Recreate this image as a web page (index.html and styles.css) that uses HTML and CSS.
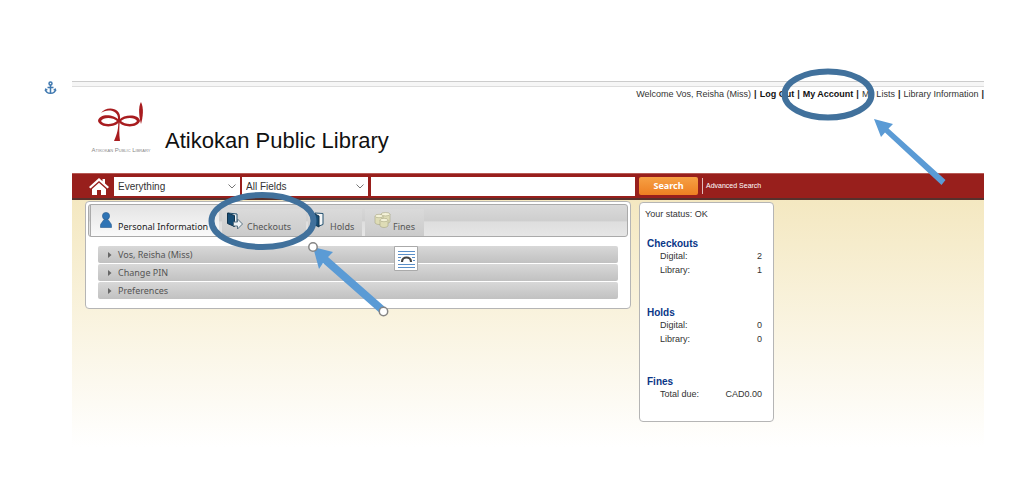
FILE: index.html
```html
<!DOCTYPE html>
<html lang="en">
<head>
<meta charset="utf-8">
<title>Atikokan Public Library</title>
<link rel="stylesheet" href="styles.css">
</head>
<body>
<div class="page">
  <header class="header">
    <nav class="user-nav">
      <span>Welcome Vos, Reisha (Miss)</span><b>|</b>
      <a class="strong" href="#">Log Out</a><b>|</b>
      <a class="strong" href="#">My Account</a><b>|</b>
      <a href="#">My Lists</a><b>|</b>
      <a href="#">Library Information</a><b>|</b>
    </nav>
    <div class="brand">
      <div class="logo">
        <svg width="46" height="42" viewBox="0 0 46 42" fill="#a81c1f">
          <path d="M3 11C8 7 21 7 20 18h2C24 4 7 4 3 11Z"/>
          <path fill-rule="evenodd" d="M0 19c1-8 16-7 21-1c5-6 20-6 21 1c-2 7-17 7-21 1c-4 6-19 6-21-1Zm3 0c2 4 12 4 16 0c-4-4-14-4-16 0Zm20 0c4 4 14 4 16 0c-2-4-12-4-16 0Z"/>
          <path d="M20 18c1 8-1 14-4 21h6c-1-7-1-14 0-21Z"/>
          <path d="M43 0c3 6 2 15 0 22c-2-7-3-17 0-22Z"/>
        </svg>
        <span class="logo-text">Atikokan Public Library</span>
      </div>
      <h1 class="title">Atikokan Public Library</h1>
    </div>
  </header>

  <form class="search-bar">
    <a class="home" href="#" aria-label="Home">
      <svg width="20" height="17" viewBox="0 0 20 17" fill="#fff"><path d="M10 0L0 9l1.500 1.500L10 3l8.500 7.500L20 9l-4-3.600V1h-2.500v2.200Z"/><path d="M3 11l7-6.300L17 11v6h-5v-5H8v5H3Z"/></svg>
    </a>
    <div class="select-wrap">
      <select class="field" aria-label="Search in"><option>Everything</option></select>
      <svg class="chevron" width="8" height="5" viewBox="0 0 8 5" fill="none" stroke="#777"><path d="M.5.5L4 4L7.500.5"/></svg>
    </div>
    <div class="select-wrap">
      <select class="field" aria-label="Search field"><option>All Fields</option></select>
      <svg class="chevron" width="8" height="5" viewBox="0 0 8 5" fill="none" stroke="#777"><path d="M.5.5L4 4L7.500.5"/></svg>
    </div>
    <input class="field query" type="text" aria-label="Search terms">
    <button class="search-button" type="button">Search</button>
    <a class="advanced" href="#">Advanced Search</a>
  </form>

  <main class="content">
    <section class="panel account">
      <div class="tabs" role="tablist">
        <button class="tab active" type="button" role="tab" aria-selected="true">
          <svg width="12" height="16" viewBox="0 0 12 16" fill="#2f74b5" stroke="#285b8d" stroke-width=".6"><path d="M4 7.500C1 12 0 12 .5 15.500h11C12 12 11 12 8 7.500Z"/><circle cx="6" cy="4" r="3.600"/></svg>
          <span>Personal Information</span>
        </button>
        <button class="tab checkouts" type="button" role="tab">
          <svg width="18" height="18" viewBox="0 0 18 18"><path d="M2 1l9 1v10l-3 3Z" fill="#f4f6f7" stroke="#23506f"/><path d="M1.500 1l7 2.500v11l-7-3Z" fill="#174d75" stroke="#12344d"/><path d="M7.500 10h4V7l5 5-5 5v-3h-4Z" fill="#eef3f5" stroke="#5b7383"/></svg>
          <span>Checkouts</span>
        </button>
        <button class="tab holds" type="button" role="tab">
          <svg width="12" height="16" viewBox="0 0 12 16"><path d="M3 1l8 .5v11L7 14Z" fill="#f4f6f7" stroke="#23506f"/><path d="M1 1l6 3v11l-6-3Z" fill="#174d75" stroke="#12344d"/></svg>
          <span>Holds</span>
        </button>
        <button class="tab fines" type="button" role="tab">
          <svg width="17" height="16" viewBox="0 0 17 16" fill="#dedcb6" stroke="#9e9c78" stroke-width=".5"><path d="M7 2v8c2 2 7 2 9 0V2Z"/><ellipse cx="11.500" cy="2.200" rx="4.500" ry="1.700" fill="#f4f2d8"/><path d="M1 4v7c2 2 6 2 8 0V4Z"/><ellipse cx="5" cy="4" rx="4" ry="1.700" fill="#f4f2d8"/><path d="M6 8v6c2 2 6 2 8 0V8Z"/><ellipse cx="10" cy="8" rx="4" ry="1.700" fill="#f4f2d8"/></svg>
          <span>Fines</span>
        </button>
      </div>
      <div class="accordion">
        <button class="row" type="button"><svg width="4" height="6" viewBox="0 0 4 6"><path d="M0 0l3.500 3L0 6Z" fill="#666"/></svg>Vos, Reisha (Miss)</button>
        <button class="row" type="button"><svg width="4" height="6" viewBox="0 0 4 6"><path d="M0 0l3.500 3L0 6Z" fill="#666"/></svg>Change PIN</button>
        <button class="row" type="button"><svg width="4" height="6" viewBox="0 0 4 6"><path d="M0 0l3.500 3L0 6Z" fill="#666"/></svg>Preferences</button>
      </div>
    </section>

    <aside class="panel summary">
      <p class="status">Your status: OK</p>
      <section class="group">
        <h2>Checkouts</h2>
        <dl><dt>Digital:</dt><dd>2</dd><dt>Library:</dt><dd>1</dd></dl>
      </section>
      <section class="group">
        <h2>Holds</h2>
        <dl><dt>Digital:</dt><dd>0</dd><dt>Library:</dt><dd>0</dd></dl>
      </section>
      <section class="group">
        <h2>Fines</h2>
        <dl><dt>Total due:</dt><dd>CAD0.00</dd></dl>
      </section>
    </aside>
  </main>

  <svg class="annotations" width="1024" height="481" viewBox="0 0 1024 481" fill="none" aria-hidden="true">
    <g stroke="#4079b0" stroke-width="1.500"><circle cx="50.500" cy="83.500" r="1.500"/><path d="M50.500 85v9M47.500 87.500h6M45.500 89.500c.5 5 9.500 5 10 0"/><path d="M44.500 91l1-3 2.500 2ZM56.500 91l-1-3-2.500 2Z" fill="#4079b0" stroke="none"/></g>
    <g stroke="#41719c" stroke-width="6"><ellipse cx="828" cy="94.500" rx="43.500" ry="23"/><ellipse cx="262.500" cy="221" rx="51" ry="26"/></g>
    <g fill="#5b9bd5">
      <path d="M874 119l19 5-4.500 4.500L945.500 180l-4 5L885 132.500l-4 4.500Z"/>
      <path d="M313 247l20 5-5 5L386 308l-5 6-58-51-4 6Z"/>
    </g>
    <g fill="#fff" stroke="#858585" stroke-width="1.500"><circle cx="313" cy="247" r="4.200"/><circle cx="383.500" cy="311.500" r="4.200"/></g>
    <path d="M394.500 246.500h23v24h-23Z" fill="#fff" stroke="#aaa"/>
    <path d="M398 251.500h17M398 254.500h17M398 257.500h3M412 257.500h3M398 260.500h2M413 260.500h2M398 264.500h17M398 267.500h17" stroke="#5b8fc8"/>
    <path d="M402 262c0-6 9-6 9 0" stroke="#444" stroke-width="2.200"/>
  </svg>
</div>
</body>
</html>
```
FILE: styles.css
```css
* { box-sizing: border-box; }

body {
  margin: 0;
  background: #fff;
  color: #333;
  font: 9px/12px "Liberation Sans", Arial, sans-serif;
}

a { color: inherit; text-decoration: none; }
h1, h2, p, dl, dd { margin: 0; }
button, select, input { font: inherit; color: inherit; border: 0; padding: 0; border-radius: 0; }
svg { flex: none; }

.page { position: relative; padding: 81px 40px 32px 72px; }

.header {
  border-top: 1px solid #ccc;
  padding-bottom: 19px;
}
.header::before {
  content: "";
  display: block;
  height: 4px;
  background: #f6f6f6;
  border-bottom: 1px solid #ddd;
}

.user-nav { display: flex; justify-content: flex-end; gap: 3px; padding: 1px 0 2px; white-space: nowrap; }
.user-nav .strong { font-weight: bold; color: #111; }
.user-nav b { color: #222; }

.brand { display: flex; align-items: flex-end; gap: 12px; padding-left: 17px; }
.logo { display: flex; flex-direction: column; align-items: center; gap: 2px; width: 64px; }
.logo-text { font: 6px/8px "Liberation Sans", Arial, sans-serif; font-variant: small-caps; color: #888; white-space: nowrap; }
.title { font-size: 22px; line-height: 26px; font-weight: normal; color: #111; }

.search-bar {
  display: flex;
  align-items: center;
  height: 27px;
  padding-left: 17px;
  background: #981f1c;
  border-top: 1px solid #b75a55;
  border-bottom: 2px solid #57302c;
}
.home { display: flex; margin-right: 5px; }
.select-wrap { position: relative; display: flex; width: 126px; margin-right: 2px; }
.field { height: 19px; background: #fff; outline: 0; }
.select-wrap .field { width: 100%; padding: 1px 0 0 4px; appearance: none; font-size: 10px; }
.chevron { position: absolute; right: 4px; top: 7px; pointer-events: none; }
.query { flex: 0 1 264px; min-width: 0; margin-left: 1px; padding: 0 4px; }
.search-button {
  width: 59px;
  height: 18px;
  margin: 0 4px;
  border-radius: 2px;
  background: linear-gradient(#f6a044, #ee7f22);
  color: #fff;
  font: bold 9px/18px "Noto Sans", sans-serif;
}
.advanced { border-left: 1px solid #e2bdbb; padding-left: 3px; color: #fff; font-size: 7px; line-height: 16px; white-space: nowrap; }

.content {
  display: flex;
  align-items: flex-start;
  gap: 8px;
  min-height: 247px;
  padding: 1px 13px 0;
  background: linear-gradient(#f4e8c1, #fff);
}
.panel { background: #fff; border: 1px solid #b5b5b5; border-radius: 4px; }

.account { flex: 0 1 546px; min-width: 0; padding: 2px 2px 9px; }
.tabs {
  display: flex;
  align-items: flex-end;
  height: 33px;
  border: 1px solid #aaa;
  border-radius: 3px;
  background: linear-gradient(#dadada, #cecece 52%, #dedede 54%, #e6e6e6);
  color: #555;
  font: 9px/12px "Noto Sans", Verdana, sans-serif;
}
.tab { display: flex; align-items: flex-start; height: 27px; padding-top: 3px; background: linear-gradient(#dadada, #cbcbcb); white-space: nowrap; }
.tab span { padding-top: 9px; }
.tab.active { width: 129px; height: 31px; margin-left: 1px; padding: 7px 0 0 9px; gap: 6px; background: linear-gradient(#e4e4e4, #fafafa); color: #222; border-left: 1px solid #aaa; }
.checkouts { width: 84px; margin-left: 3px; padding-left: 4px; gap: 3px; }
.holds { width: 54px; margin-left: 2px; padding-left: 4px; gap: 6px; }
.fines { width: 59px; margin-left: 3px; padding-left: 9px; gap: 2px; }

.accordion { display: flex; flex-direction: column; gap: 1px; padding: 9px 10px 0; }
.row {
  display: flex;
  align-items: center;
  gap: 6px;
  height: 17px;
  padding-left: 10px;
  border-radius: 2px;
  background: linear-gradient(#d8d8d8, #c1c1c1);
  color: #555;
  font: 9px/12px "Noto Sans", Verdana, sans-serif;
}

.summary { flex: 0 0 135px; margin-top: 1px; padding: 5px 11px 20px 5px; }
.group { margin: 19px 0 31px 2px; }
.group + .group { margin-top: 0; }
.group:last-child { margin-bottom: 0; }
.group h2 { font-size: 10px; line-height: 10px; color: #0a3687; }
.group dl { display: grid; grid-template-columns: 1fr auto; padding-left: 13px; line-height: 14px; }

.annotations { position: absolute; left: 0; top: 0; pointer-events: none; }
```
